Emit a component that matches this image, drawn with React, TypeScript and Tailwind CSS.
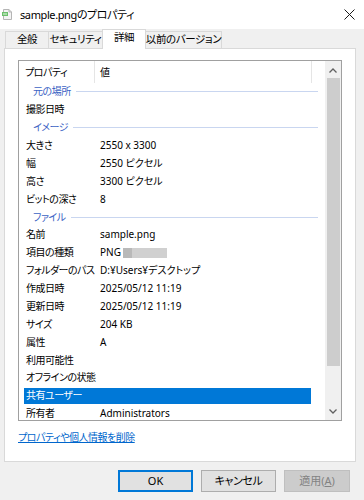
import React from "react";

type Row = { g?: string; k?: string; v?: string; redact?: boolean; sel?: boolean };

const rows: Row[] = [
  { g: "元の場所" },
  { k: "撮影日時", v: "" },
  { g: "イメージ" },
  { k: "大きさ", v: "2550 x 3300" },
  { k: "幅", v: "2550 ピクセル" },
  { k: "高さ", v: "3300 ピクセル" },
  { k: "ビットの深さ", v: "8" },
  { g: "ファイル" },
  { k: "名前", v: "sample.png" },
  { k: "項目の種類", v: "PNG", redact: true },
  { k: "フォルダーのパス", v: "D:¥Users¥デスクトップ" },
  { k: "作成日時", v: "2025/05/12 11:19" },
  { k: "更新日時", v: "2025/05/12 11:19" },
  { k: "サイズ", v: "204 KB" },
  { k: "属性", v: "A" },
  { k: "利用可能性", v: "" },
  { k: "オフラインの状態", v: "" },
  { k: "共有ユーザー", v: "", sel: true },
  { k: "所有者", v: "Administrators" },
];

function FileIcon() {
  return (
    <svg width="11" height="11" viewBox="0 0 11 11">
      <path d="M1.5 0.5 H7 L9.5 3 V10.5 H1.5 Z" fill="#f4f4f4" stroke="#b5b5b5" strokeWidth="1" />
      <path d="M7 0.5 V3 H9.5" fill="none" stroke="#b5b5b5" strokeWidth="1" />
      <rect x="0" y="3" width="6" height="4" fill="#6cbf6c" />
      <rect x="1" y="4" width="4" height="2" fill="#a8dca8" />
    </svg>
  );
}

export default function App() {
  return (
    <div
      className="w-[364px] h-[500px] bg-[#f0f0f0] flex flex-col text-[10px] text-[#000] overflow-hidden [font-feature-settings:'palt']"
      style={{ fontFamily: '"Noto Sans", "Noto Sans CJK JP", sans-serif' }}
    >
      {/* Title bar */}
      <div className="h-[29px] bg-white flex items-center pl-[2px] pr-[9px] shrink-0">
        <FileIcon />
        <span className="ml-[7px] text-[11px] leading-none tracking-[-0.4px] whitespace-nowrap">sample.pngのプロパティ</span>
        <div className="flex-1" />
        <svg width="11" height="11" viewBox="0 0 11 11">
          <path d="M0.5 0.5 L10.5 10.5 M10.5 0.5 L0.5 10.5" stroke="#1a1a1a" strokeWidth="1" />
        </svg>
      </div>

      {/* Tabs */}
      <div className="h-[19px] flex items-end pl-[5px] shrink-0 relative z-10 text-[10.5px] tracking-[-0.4px] whitespace-nowrap">
        <div className="h-[17px] w-[43px] border-l border-t border-[#d9d9d9] flex items-center justify-center bg-[#f0f0f0]">
          全般
        </div>
        <div className="h-[17px] w-[54px] border-l border-t border-[#d9d9d9] flex items-center justify-center bg-[#f0f0f0]">
          セキュリティ
        </div>
        <div className="h-[20px] w-[44px] border-l border-t border-r border-[#d9d9d9] flex items-center justify-center bg-white -mb-[1px] pb-[3px]">
          詳細
        </div>
        <div className="h-[17px] w-[76px] border-t border-r border-[#d9d9d9] flex items-center justify-center bg-[#f0f0f0]">
          以前のバージョン
        </div>
      </div>

      {/* Panel */}
      <div className="ml-[4px] w-[352px] h-[414px] bg-white border border-[#d9d9d9] shrink-0 flex flex-col">
        <div className="ml-[13px] mt-[11px] w-[324px] h-[361px] border border-[#a0a0a0] flex overflow-hidden">
          <div className="flex-1 flex flex-col overflow-hidden">
            <div className="h-[22px] flex items-center shrink-0">
              <div className="w-[75px] pl-[6px] h-full flex items-center tracking-[-0.5px]">プロパティ</div>
              <div className="w-[217px] pl-[5px] h-full flex items-center border-l border-[#e5e5e5]">値</div>
              <div className="flex-1 h-full border-l border-[#e5e5e5]" />
            </div>
            {rows.map((r, i) =>
              r.g ? (
                <div key={i} className="h-[17.88px] shrink-0 flex items-center pl-[5px]">
                  <div className="w-[294px] flex items-center pl-[9px]">
                    <span className="text-[#3c63c4] tracking-[-0.5px]">{r.g}</span>
                    <div className="flex-1 h-px bg-[#c9d6f0] ml-[5px]" />
                  </div>
                </div>
              ) : (
                <div key={i} className="h-[17.88px] shrink-0 flex items-center pl-[5px]">
                  <div
                    className={
                      "w-[287px] h-[16px] flex items-center " +
                      (r.sel ? "bg-[#0078d7] text-white" : "")
                    }
                  >
                    <div className="w-[70px] pl-[2px] whitespace-nowrap tracking-[-0.5px]">{r.k}</div>
                    <div className="pl-[6px] whitespace-nowrap flex items-center">
                      {r.v}
                      {r.redact && (
                        <span className="ml-[2px] flex h-[10px]">
                          <span className="w-[9px] bg-[#b9b9b9]" />
                          <span className="w-[35px] bg-[#d0d0d0]" />
                        </span>
                      )}
                    </div>
                  </div>
                </div>
              )
            )}
          </div>
          {/* Scrollbar */}
          <div className="w-[16px] bg-[#f0f0f0] flex flex-col items-center shrink-0">
            <div className="h-[16px] w-full flex items-center justify-center mt-[1px]">
              <svg width="8" height="5" viewBox="0 0 8 5">
                <path d="M0.5 4.5 L4 1 L7.5 4.5" fill="none" stroke="#606060" strokeWidth="1.3" />
              </svg>
            </div>
            <div className="w-[13px] h-[288px] bg-[#cdcdcd]" />
            <div className="flex-1" />
            <div className="h-[16px] w-full flex items-center justify-center mb-[1px]">
              <svg width="8" height="5" viewBox="0 0 8 5">
                <path d="M0.5 0.5 L4 4 L7.5 0.5" fill="none" stroke="#606060" strokeWidth="1.3" />
              </svg>
            </div>
          </div>
        </div>
        <div className="ml-[13px] mt-[11px] text-[#0066cc] underline leading-none tracking-[-0.5px]">
          プロパティや個人情報を削除
        </div>
      </div>

      {/* Buttons */}
      <div className="flex mt-[8px] pl-[118px] gap-[8px] text-[11px]">
        <div className="w-[75px] h-[22px] bg-[#e1e1e1] border border-[#0078d7] shadow-[inset_0_0_0_1px_#0078d7] flex items-center justify-center">
          OK
        </div>
        <div className="w-[75px] h-[22px] bg-[#e1e1e1] border border-[#adadad] flex items-center justify-center tracking-[-0.4px]">
          キャンセル
        </div>
        <div className="w-[66px] h-[22px] bg-[#cccccc] border border-[#bfbfbf] flex items-center justify-center text-[#838383]">
          適用(<span className="underline">A</span>)
        </div>
      </div>
    </div>
  );
}
